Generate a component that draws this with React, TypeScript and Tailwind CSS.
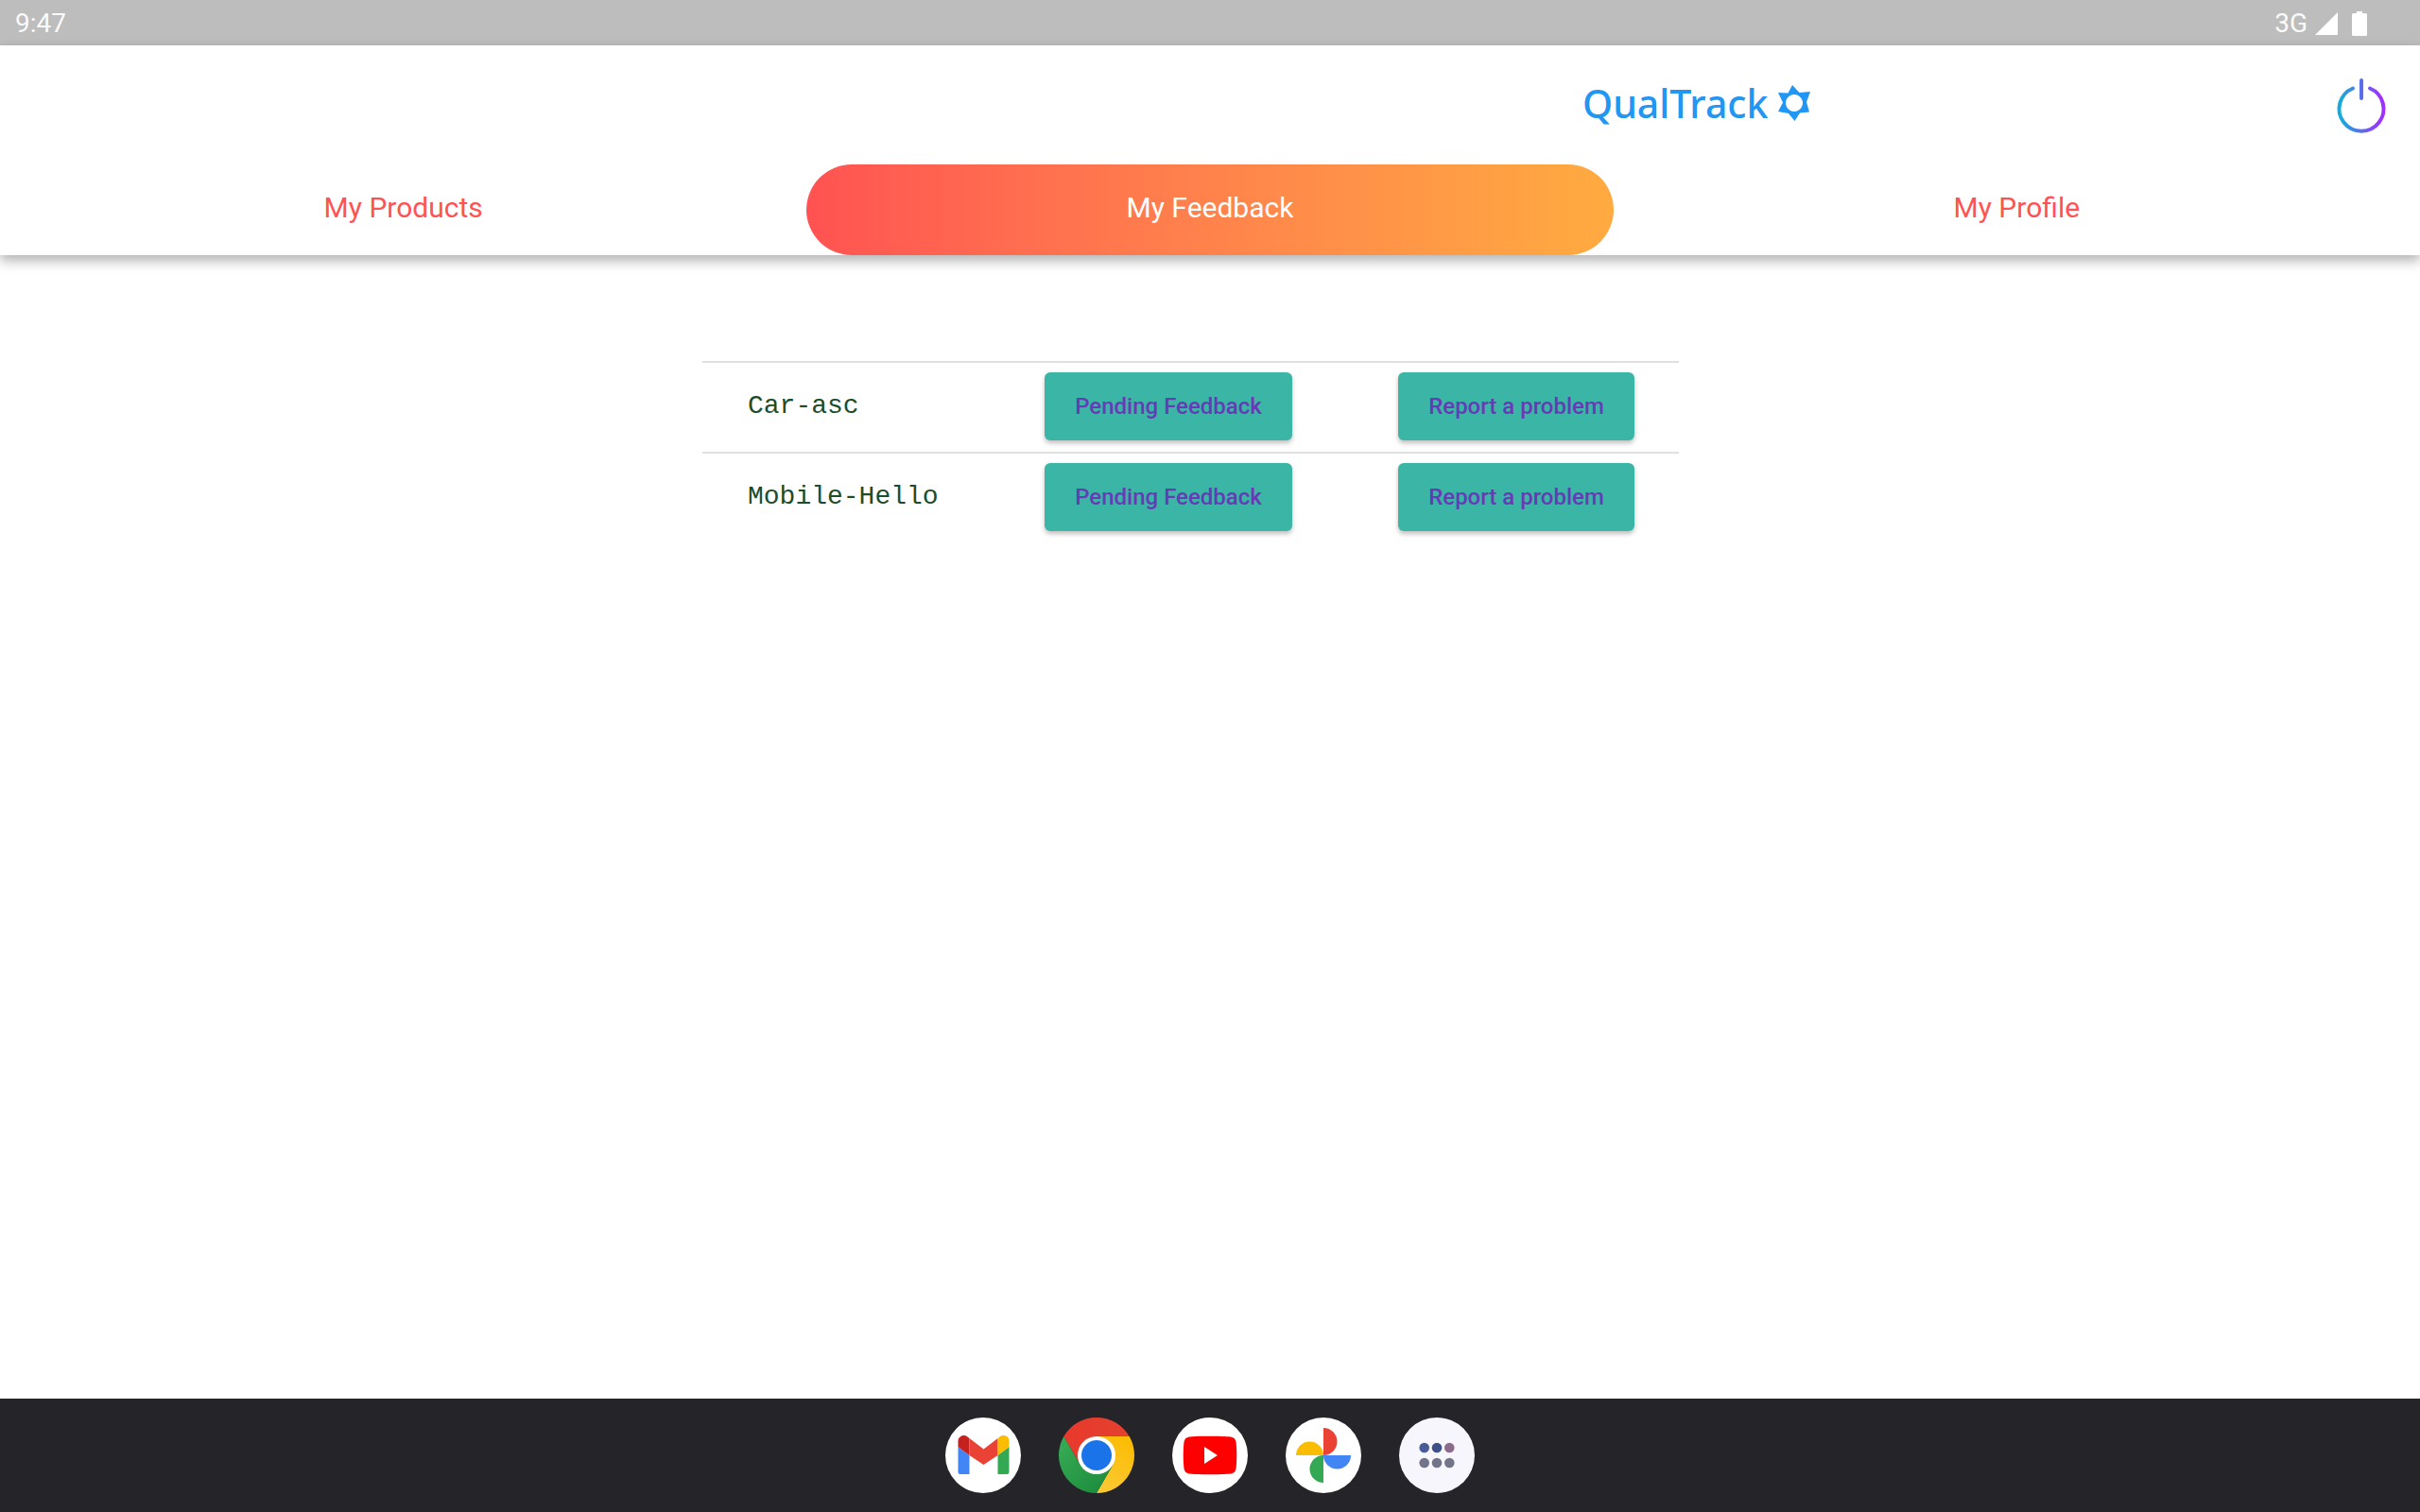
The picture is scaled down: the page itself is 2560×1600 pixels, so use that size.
const tabs = [
  { label: 'My Products', active: false },
  { label: 'My Feedback', active: true },
  { label: 'My Profile', active: false },
]

const products = ['Car-asc', 'Mobile-Hello']

function SmallButton({ label, width }: { label: string; width: string }) {
  return (
    <button className={`${width} h-[72px] rounded-[6px] bg-[#3bb6a6] text-center text-[24px] font-medium text-[#673ab7] shadow-[0_3px_5px_rgba(0,0,0,0.25)] font-[Roboto,sans-serif]`}>
      {label}
    </button>
  )
}

function PowerIcon() {
  return (
    <svg width="60" height="64" viewBox="0 0 60 64" fill="none">
      <defs>
        <linearGradient id="pow" x1="0" y1="0" x2="1" y2="0">
          <stop offset="0.05" stopColor="#18aadb" />
          <stop offset="0.95" stopColor="#a030ff" />
        </linearGradient>
        <linearGradient id="powbar" gradientUnits="userSpaceOnUse" x1="5" y1="0" x2="55" y2="0">
          <stop offset="0.05" stopColor="#18aadb" />
          <stop offset="0.95" stopColor="#a030ff" />
        </linearGradient>
      </defs>
      <path d="M21 11.5 A23.5 23.5 0 1 0 39 11.5" stroke="url(#pow)" strokeWidth="4" strokeLinecap="round" />
      <path d="M30 3 V22" stroke="url(#powbar)" strokeWidth="4" strokeLinecap="round" />
    </svg>
  )
}

function LogoStar() {
  return (
    <svg width="38" height="40" viewBox="0 0 38 40">
      <path
        fillRule="evenodd"
        fill="#2196f3"
        d="M17 1 L24.5 9 L36 8 L32 19 L35 29.5 L25 30.5 L19.5 39 L13 31 L2 29 L7 19.5 L2 9 L12.5 9.5 Z M19 11 A9 9 0 1 0 19.01 11 Z"
      />
    </svg>
  )
}

function GmailIcon() {
  return (
    <svg width="80" height="80" viewBox="0 0 80 80">
      <circle cx="40" cy="40" r="40" fill="#fff" />
      <path d="M13.5 31 L25.5 40 V60 H16 A2.5 2.5 0 0 1 13.5 57.5 Z" fill="#4285f4" />
      <path d="M67.5 31 L55.5 40 V60 H65 A2.5 2.5 0 0 0 67.5 57.5 Z" fill="#34a853" />
      <path d="M13.5 31 V25 C13.5 19.5 19.5 17.5 23.5 20.5 L25.5 22 V40 Z" fill="#c5221f" />
      <path d="M25.5 22 L40.5 33.5 L55.5 22 V40 L40.5 50 L25.5 40 Z" fill="#ea4335" />
      <path d="M55.5 22 L57.5 20.5 C61.5 17.5 67.5 19.5 67.5 25 V31 L55.5 40 Z" fill="#fbbc04" />
    </svg>
  )
}

function ChromeIcon() {
  return (
    <svg width="80" height="80" viewBox="0 0 80 80">
      <defs>
        <linearGradient id="chr" x1="0" y1="0" x2="1" y2="0">
          <stop offset="0" stopColor="#e8392c" />
          <stop offset="1" stopColor="#e4412f" />
        </linearGradient>
        <linearGradient id="chg" x1="0.7" y1="1" x2="0.1" y2="0.2">
          <stop offset="0" stopColor="#1e8e3e" />
          <stop offset="1" stopColor="#34a853" />
        </linearGradient>
        <linearGradient id="chy" x1="0.3" y1="1" x2="0.7" y2="0">
          <stop offset="0" stopColor="#fcc934" />
          <stop offset="1" stopColor="#fbbc04" />
        </linearGradient>
      </defs>
      <path d="M40 40 L40 20 H74.64 A40 40 0 0 0 5.36 20 L22.68 50 Z" fill="url(#chr)" />
      <path d="M40 40 L40 20 H74.64 A40 40 0 0 1 40 80 L57.32 50 Z" fill="url(#chy)" />
      <path d="M40 80 A40 40 0 0 1 5.36 20 L22.68 50 L57.32 50 Z" fill="url(#chg)" />
      <circle cx="40" cy="40" r="20" fill="#fff" />
      <circle cx="40" cy="40" r="16" fill="#1a73e8" />
    </svg>
  )
}

function YoutubeIcon() {
  return (
    <svg width="80" height="80" viewBox="0 0 80 80">
      <circle cx="40" cy="40" r="40" fill="#fff" />
      <path d="M18 20.5 C28 19.5 52 19.5 62 20.5 C65.5 21 67 23 67.5 26 C68.5 33 68.5 47 67.5 54 C67 57 65.5 59 62 59.5 C52 60.5 28 60.5 18 59.5 C14.5 59 13 57 12.5 54 C11.5 47 11.5 33 12.5 26 C13 23 14.5 21 18 20.5 Z" fill="#ff0000" />
      <path d="M34 31 L48 40 L34 49 Z" fill="#fff" />
    </svg>
  )
}

function PhotosIcon() {
  return (
    <svg width="80" height="80" viewBox="0 0 80 80">
      <circle cx="40" cy="40" r="40" fill="#fff" />
      <path d="M40 11 A14.5 14.5 0 0 1 40 40 Z" fill="#ea4335" />
      <path d="M11 40 A14.5 14.5 0 0 1 40 40 Z" fill="#fbbc04" />
      <path d="M69 40 A14.5 14.5 0 0 1 40 40 Z" fill="#4285f4" />
      <path d="M40 69 A14.5 14.5 0 0 1 40 40 Z" fill="#34a853" />
    </svg>
  )
}

function AppsIcon() {
  return (
    <svg width="80" height="80" viewBox="0 0 80 80">
      <circle cx="40" cy="40" r="40" fill="#f8f6fd" />
      <circle cx="26.7" cy="32" r="5.3" fill="#4a5c98" />
      <circle cx="40" cy="32" r="5.3" fill="#3e5089" />
      <circle cx="53.3" cy="32" r="5.3" fill="#8b6a8a" />
      <circle cx="26.7" cy="48" r="5.3" fill="#727489" />
      <circle cx="40" cy="48" r="5.3" fill="#727489" />
      <circle cx="53.3" cy="48" r="5.3" fill="#727489" />
    </svg>
  )
}

export default function App() {
  return (
    <div className="flex h-screen w-full flex-col bg-white font-[Roboto,sans-serif]">
      {/* status bar */}
      <div className="flex h-[48px] shrink-0 items-center bg-[#bdbdbd] pl-[16px] pr-[56px] pt-[2px] text-[28px] text-white/95">
        <span>9:47</span>
        <span className="ml-auto">3G</span>
        <svg className="ml-[8px]" width="24" height="24" viewBox="0 0 24 24" fill="#fff">
          <path d="M24 0 V24 H0 Z" />
        </svg>
        <svg className="ml-[15px]" width="16" height="26" viewBox="0 0 16 26" fill="#fff">
          <path d="M5 0 H11 V2 H14.5 A1.5 1.5 0 0 1 16 3.5 V24.5 A1.5 1.5 0 0 1 14.5 26 H1.5 A1.5 1.5 0 0 1 0 24.5 V3.5 A1.5 1.5 0 0 1 1.5 2 H5 Z" />
        </svg>
      </div>

      {/* header */}
      <div className="shrink-0 bg-white shadow-[0_6px_12px_rgba(0,0,0,0.3)]">
        <div className="flex h-[126px] items-center">
          <div className="ml-[1674px] flex items-center gap-[9px] pb-[4px]">
            <span className="text-[41px] font-medium leading-none text-[#2196f3] font-['Noto_Sans',sans-serif]">QualTrack</span>
            <LogoStar />
          </div>
          <div className="ml-auto mr-[32px] pt-[5px]">
            <PowerIcon />
          </div>
        </div>
        <div className="flex h-[96px]">
          {tabs.map(t => (
            <div
              key={t.label}
              className={
                t.active
                  ? 'flex flex-1 items-center justify-center rounded-full bg-gradient-to-r from-[#ff5252] to-[#ffab40] pb-[6px] text-[30px] text-white'
                  : 'flex flex-1 items-center justify-center pb-[6px] text-[30px] text-[#ff5252]'
              }
            >
              {t.label}
            </div>
          ))}
        </div>
      </div>

      {/* feedback table */}
      <div className="flex-1 pt-[112px]">
        <div className="ml-[743px] w-[1033px]">
          {products.map(name => (
            <div key={name} className="grid h-[96px] grid-cols-[362px_374px_1fr] items-start border-t-2 border-[#e0e0e0] pt-[10px]">
              <span className="pl-[48px] pt-[16px] text-[28px] leading-[40px] text-[#1b4d2b] font-['Liberation_Mono',monospace]">{name}</span>
              <div>
                <SmallButton label="Pending Feedback" width="w-[262px]" />
              </div>
              <div>
                <SmallButton label="Report a problem" width="w-[250px]" />
              </div>
            </div>
          ))}
        </div>
      </div>

      {/* dock */}
      <div className="flex h-[120px] shrink-0 items-center justify-center gap-[40px] bg-[#252429]">
        <GmailIcon />
        <ChromeIcon />
        <YoutubeIcon />
        <PhotosIcon />
        <AppsIcon />
      </div>
    </div>
  )
}
